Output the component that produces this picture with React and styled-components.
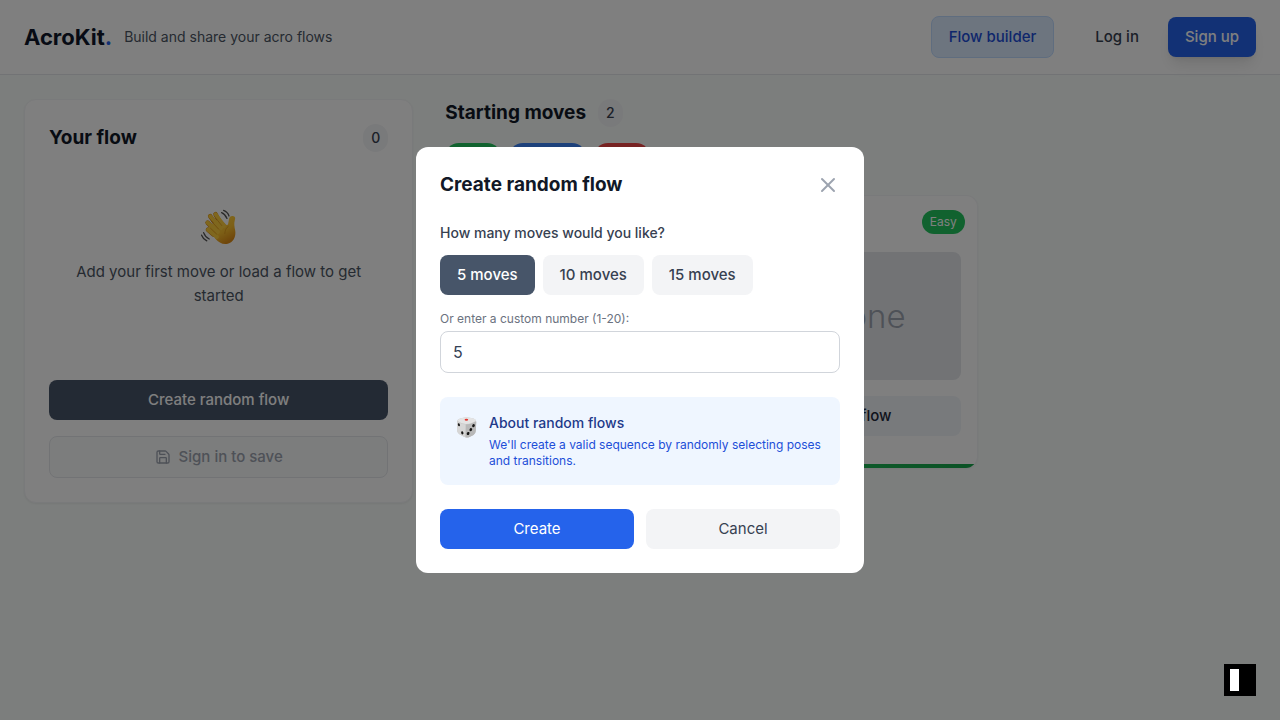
import React, { useState } from "react";
import styled, { createGlobalStyle, css } from "styled-components";
import { X, Save } from "lucide-react";

const GlobalStyle = createGlobalStyle`
  *, *::before, *::after { box-sizing: border-box; }
  body {
    margin: 0;
    background: #f8fcfa;
    color: #0f172a;
    font-family: Inter, "Noto Sans", sans-serif;
    font-size: 15px;
    line-height: 24px;
    -webkit-font-smoothing: antialiased;
  }
  h1, h2, h3, p { margin: 0; }
  button, input { font: inherit; }
`;

const Page = styled.div`
  min-height: 100vh;
`;

const Header = styled.header`
  display: flex;
  align-items: center;
  justify-content: space-between;
  padding: 16px 24px;
  background: #ffffff;
  border-bottom: 1px solid #e5e7eb;
`;

const Brand = styled.div`
  display: flex;
  align-items: center;
  gap: 12px;
`;

const Logo = styled.h1`
  font-size: 22px;
  line-height: 32px;
  font-weight: 700;
  span { color: #2563eb; }
`;

const Tagline = styled.p`
  font-size: 14px;
  line-height: 20px;
  color: #4b5563;
`;

const Nav = styled.nav`
  display: flex;
  align-items: center;
  gap: 24px;
`;

const AuthActions = styled.div`
  display: flex;
  gap: 12px;
`;

const NavLink = styled.a`
  padding: 8px 17px;
  border: 1px solid #bfdbfe;
  border-radius: 8px;
  background: #dbeafe;
  color: #1d4ed8;
  font-weight: 500;
  text-decoration: none;
`;

const variants = {
  primary: css`background: #2563eb; color: #ffffff;`,
  dark: css`background: #475569; color: #ffffff;`,
  muted: css`background: #f3f4f6; color: #374151;`,
  slate: css`background: #f1f5f9; color: #1e293b;`,
  ghost: css`background: transparent; color: #374151;`,
  outline: css`
    background: #f9fafb;
    border: 1px solid #e5e7eb;
    color: #9ca3af;
  `,
};

const Button = styled.button`
  display: flex;
  align-items: center;
  justify-content: center;
  gap: 8px;
  padding: 8px 17px;
  border: 0;
  border-radius: 8px;
  font-weight: ${(p) => p.$weight || 500};
  cursor: pointer;
  ${(p) => variants[p.$variant]}
  ${(p) => p.$raised && css`
    box-shadow: 0 10px 15px -3px rgba(0, 0, 0, 0.1), 0 4px 6px -4px rgba(0, 0, 0, 0.1);
  `}
`;

const Main = styled.main`
  display: grid;
  grid-template-columns: repeat(3, minmax(0, 1fr));
  align-items: start;
  gap: 32px;
  padding: 24px;
`;

const FlowPanel = styled.section`
  display: flex;
  flex-direction: column;
  padding: 24px;
  background: #ffffff;
  border: 1px solid #f3f4f6;
  border-radius: 12px;
  box-shadow: 0 1px 2px rgba(0, 0, 0, 0.05);
`;

const TitleRow = styled.div`
  display: flex;
  align-items: center;
  justify-content: ${(p) => (p.$spread ? "space-between" : "flex-start")};
  gap: 12px;
`;

const Title = styled.h2`
  font-size: 19px;
  line-height: 28px;
  font-weight: 700;
  color: #111827;
`;

const Count = styled.span`
  padding: 4px 8px;
  border-radius: 14px;
  background: #f3f4f6;
  color: #374151;
  font-size: 14px;
  line-height: 20px;
  font-weight: 500;
`;

const EmptyState = styled.div`
  display: flex;
  flex-direction: column;
  align-items: center;
  gap: 12px;
  margin: 24px 0;
  padding: 32px 24px 48px;
  color: #4b5563;
  text-align: center;
`;

const PanelActions = styled.div`
  display: flex;
  flex-direction: column;
  gap: 16px;
`;

const MovesSection = styled.section`
  grid-column: span 2;
`;

const Filters = styled.div`
  display: flex;
  gap: 8px;
  margin: 16px 0 24px;
`;

const levels = { Easy: "#22c55e", Medium: "#3b82f6", Hard: "#ef4444" };

const Filter = styled.button`
  padding: 4px 12px;
  border: 0;
  border-radius: 14px;
  background: ${(p) => levels[p.$level]};
  color: #ffffff;
  font-size: 14px;
  line-height: 20px;
  font-weight: 400;
`;

const Cards = styled.div`
  display: grid;
  grid-template-columns: repeat(3, minmax(0, 1fr));
  gap: 24px;
`;

const Card = styled.article`
  position: relative;
  display: flex;
  flex-direction: column;
  gap: 16px;
  padding: 16px 16px 32px;
  overflow: hidden;
  background: #ffffff;
  border: 1px solid #f3f4f6;
  border-bottom: 0;
  border-radius: 12px;
  box-shadow: 0 1px 2px rgba(0, 0, 0, 0.05);
  &::after {
    content: "";
    position: absolute;
    inset: auto 0 0;
    height: 4px;
    background: linear-gradient(90deg, #22c55e, #16a34a);
  }
`;

const CardTitle = styled.h3`
  font-size: 16px;
  line-height: 24px;
  font-weight: 600;
`;

const Badge = styled.span`
  position: absolute;
  top: 14px;
  right: 12px;
  padding: 4px 8px;
  border-radius: 12px;
  background: ${(p) => levels[p.$level]};
  color: #ffffff;
  font-size: 12px;
  line-height: 16px;
  font-weight: 400;
`;

const Thumb = styled.div`
  display: flex;
  align-items: center;
  justify-content: center;
  height: 128px;
  border-radius: 8px;
  background: #e5e7eb;
  color: #9ca3af;
  font-size: 33px;
  line-height: 40px;
  font-weight: 300;
`;

const Backdrop = styled.div`
  position: fixed;
  inset: 0;
  z-index: 10;
  display: flex;
  align-items: center;
  justify-content: center;
  padding: 16px;
  background: rgba(0, 0, 0, 0.5);
`;

const Dialog = styled.div`
  display: flex;
  flex-direction: column;
  gap: 24px;
  width: 100%;
  max-width: 448px;
  padding: 24px;
  border-radius: 12px;
  background: #ffffff;
`;

const CloseButton = styled.button`
  display: flex;
  padding: 0;
  border: 0;
  background: none;
  color: #9ca3af;
  cursor: pointer;
`;

const Fields = styled.div`
  display: flex;
  flex-direction: column;
`;

const Question = styled.p`
  color: #374151;
  font-size: 14px;
  line-height: 20px;
  font-weight: 500;
`;

const Presets = styled.div`
  display: flex;
  gap: 8px;
  margin: 12px 0 16px;
`;

const SmallLabel = styled.label`
  margin-bottom: 4px;
  color: #6b7280;
  font-size: 12px;
  line-height: 16px;
`;

const NumberInput = styled.input`
  width: 100%;
  height: 42px;
  padding: 8px 12px;
  border: 1px solid #d1d5db;
  border-radius: 8px;
  background: #ffffff;
  color: #334155;
  font-size: 16px;
  appearance: textfield;
  &::-webkit-inner-spin-button { appearance: none; }
`;

const Info = styled.div`
  display: flex;
  gap: 12px;
  padding: 16px;
  border-radius: 8px;
  background: #eff6ff;
  svg { flex: none; margin-top: 4px; }
`;

const InfoTitle = styled.h3`
  margin-bottom: 4px;
  color: #1e3a8a;
  font-size: 14px;
  line-height: 20px;
  font-weight: 500;
`;

const InfoText = styled.p`
  color: #1d4ed8;
  font-size: 12px;
  line-height: 16px;
`;

const DialogActions = styled.div`
  display: grid;
  grid-template-columns: 1fr 1fr;
  gap: 12px;
`;

const Widget = styled.button`
  position: fixed;
  right: 24px;
  bottom: 24px;
  z-index: 20;
  display: flex;
  align-items: center;
  width: 32px;
  height: 32px;
  padding: 0 6px;
  border: 0;
  background: #000000;
  &::before {
    content: "";
    width: 9px;
    height: 22px;
    background: #ffffff;
  }
`;

function WavingHand() {
  return (
    <svg width="40" height="40" viewBox="-1 0 40 40" aria-hidden="true">
      <defs>
        <linearGradient id="skin" x1="0" y1="0" x2="0.6" y2="1">
          <stop offset="0" stopColor="#ffd84a" />
          <stop offset="0.65" stopColor="#fbc02d" />
          <stop offset="1" stopColor="#df8d16" />
        </linearGradient>
      </defs>
      <g fill="none" stroke="#d58a18" strokeWidth="4.6" strokeLinecap="round">
        <path d="M17 18 10.2 8.2M20 15 15.5 6.2M14.5 22 7.6 14.6M13.5 26.5 8 21.8" />
      </g>
      <path d="M12 26 8 20 17 12 20 10 26.2 16.7C27.4 17.4 28 17 28.2 15.6L29 11.2C29.5 8.3 31.4 7.5 33.6 8.2 35.4 8.8 35.4 10 34.8 12.2 33.8 15.6 34.5 18.8 35.2 22.6 36.2 29 33.4 34.4 27.8 35.8 22.8 37 18.6 34.4 15.6 31Z" fill="url(#skin)" />
      <g fill="none" stroke="#ffcf3d" strokeWidth="3.8" strokeLinecap="round">
        <path d="M21 20 10.2 8.2M24 18 15.5 6.2M18 24 7.6 14.6M17 29 8 21.8" />
      </g>
      <g fill="none" stroke="#d99018" strokeWidth="0.7" strokeLinecap="round">
        <path d="M11.5 13.2 18.5 21M16.5 11 21.8 17.6M10.5 20.2 16.5 26M24.8 25.5C25 22 26.2 19.8 28.2 18.4" />
      </g>
      <g fill="none" stroke="#555" strokeWidth="1.3" strokeLinecap="round">
        <path d="M21.6 4.6C24.2 5.7 26 7.7 27 10.4M23.6 2.4C26.6 3.6 28.2 5.4 29 8M3.6 24.6C4.6 27.5 6.4 29.5 9.2 31M1.6 27.2C2.6 29.9 4.2 31.6 6.8 32.8" />
      </g>
    </svg>
  );
}

function Die() {
  return (
    <svg width="21" height="21" viewBox="0 0 21 21" aria-hidden="true">
      <path d="M1 4.8Q1 2.5 4 1.6L8.5.5Q10.5 0 12.6.5L17.5 1.6Q20.2 2.3 20.3 5L19.8 14Q19.6 16.6 17.5 18L13.5 20Q10.8 21.2 8 19.8L3 17Q1 15.8 1 13Z" fill="#c9c9c9" />
      <path d="M1.2 4.8Q6 7.3 9.8 7.5L9.6 20.4Q8.6 20.2 8 19.8L3 17Q1 15.8 1 13Z" fill="#d6d6d6" />
      <path d="M9.8 7.5Q15.5 7 20.2 4.5L19.8 14Q19.6 16.6 17.5 18L13.5 20Q11.6 20.8 9.6 20.4Z" fill="#b8b8b8" />
      <path d="M1.4 4Q2 2.3 4 1.6L8.5.5Q10.5 0 12.6.5L17.5 1.6Q19.4 2.1 20 3.8 16 6.8 10 7 5 6.6 1.4 4Z" fill="#e4e4e4" />
      <ellipse cx="10.4" cy="2.8" rx="1.8" ry="1" fill="#e3342f" />
      <g fill="#161616">
        <ellipse cx="2.9" cy="7.8" rx="1" ry="1.5" transform="rotate(-18 2.9 7.8)" />
        <ellipse cx="6.3" cy="15.8" rx="1.1" ry="1.6" transform="rotate(-18 6.3 15.8)" />
        <ellipse cx="17.5" cy="8.7" rx="1.3" ry="1.6" transform="rotate(30 17.5 8.7)" />
        <ellipse cx="14.8" cy="12.7" rx="1.3" ry="1.6" transform="rotate(30 14.8 12.7)" />
        <ellipse cx="12.1" cy="16.5" rx="1.3" ry="1.6" transform="rotate(30 12.1 16.5)" />
      </g>
    </svg>
  );
}

function MoveCard({ name, level }) {
  return (
    <Card>
      <CardTitle>{name}</CardTitle>
      <Badge $level={level}>{level}</Badge>
      <Thumb aria-hidden="true">{name}</Thumb>
      <Button $variant="slate">Add to flow</Button>
    </Card>
  );
}

export default function App() {
  const [count, setCount] = useState(5);

  return (
    <Page>
      <GlobalStyle />
      <Header>
        <Brand>
          <Logo>AcroKit<span>.</span></Logo>
          <Tagline>Build and share your acro flows</Tagline>
        </Brand>
        <Nav>
          <NavLink href="#builder">Flow builder</NavLink>
          <AuthActions>
            <Button $variant="ghost">Log in</Button>
            <Button $variant="primary" $raised>Sign up</Button>
          </AuthActions>
        </Nav>
      </Header>

      <Main>
        <FlowPanel>
          <TitleRow $spread>
            <Title>Your flow</Title>
            <Count>0</Count>
          </TitleRow>
          <EmptyState>
            <WavingHand />
            <p>Add your first move or load a flow to get started</p>
          </EmptyState>
          <PanelActions>
            <Button $variant="dark">Create random flow</Button>
            <Button $variant="outline" disabled>
              <Save size={16} aria-hidden="true" />
              Sign in to save
            </Button>
          </PanelActions>
        </FlowPanel>

        <MovesSection>
          <TitleRow>
            <Title>Starting moves</Title>
            <Count>2</Count>
          </TitleRow>
          <Filters>
            {Object.keys(levels).map((level) => (
              <Filter key={level} $level={level}>{level}</Filter>
            ))}
          </Filters>
          <Cards>
            <MoveCard name="Bird" level="Easy" />
            <MoveCard name="Throne" level="Easy" />
          </Cards>
        </MovesSection>
      </Main>

      <Backdrop>
        <Dialog role="dialog" aria-modal="true" aria-labelledby="dialog-title">
          <TitleRow $spread>
            <Title id="dialog-title">Create random flow</Title>
            <CloseButton aria-label="Close"><X size={24} /></CloseButton>
          </TitleRow>
          <Fields>
            <Question>How many moves would you like?</Question>
            <Presets>
              {[5, 10, 15].map((n) => (
                <Button key={n} $variant={n === count ? "dark" : "muted"} onClick={() => setCount(n)}>
                  {n} moves
                </Button>
              ))}
            </Presets>
            <SmallLabel htmlFor="move-count">Or enter a custom number (1-20):</SmallLabel>
            <NumberInput
              id="move-count"
              type="number"
              min="1"
              max="20"
              value={count}
              onChange={(e) => setCount(Number(e.target.value))}
            />
          </Fields>
          <Info>
            <Die />
            <div>
              <InfoTitle>About random flows</InfoTitle>
              <InfoText>We'll create a valid sequence by randomly selecting poses and transitions.</InfoText>
            </div>
          </Info>
          <DialogActions>
            <Button $variant="primary" $weight={400}>Create</Button>
            <Button $variant="muted" $weight={400}>Cancel</Button>
          </DialogActions>
        </Dialog>
      </Backdrop>
      <Widget aria-label="Toggle panel" />
    </Page>
  );
}
